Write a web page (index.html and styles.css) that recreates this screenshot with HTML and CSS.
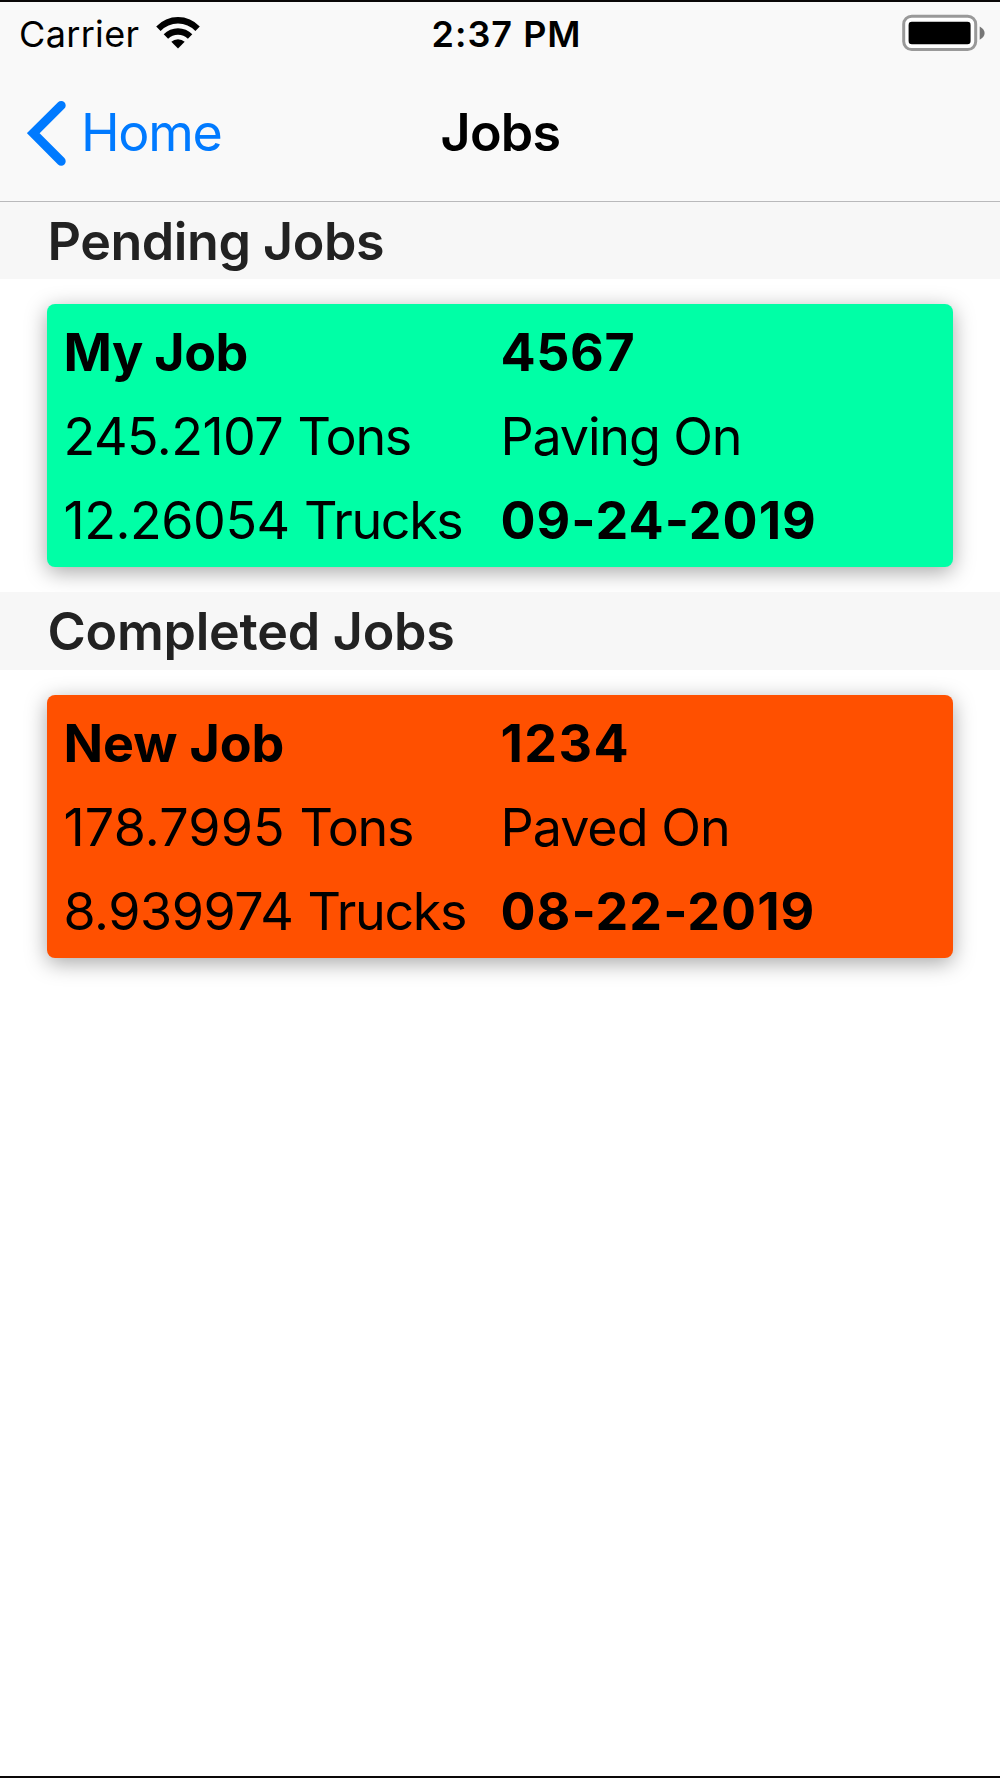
FILE: index.html
```html
<!DOCTYPE html>
<html lang="en">
<head>
<meta charset="utf-8">
<title>Jobs</title>
<link rel="stylesheet" href="styles.css">
</head>
<body>
<div class="screen">
  <header class="top">
    <div class="status">
      <div class="carrier">
        <span class="carrier-name">Carrier</span>
        <svg class="wifi" width="46" height="34" viewBox="0 0 46 34">
          <path d="M1.2 10.4 A30.2 30.2 0 0 1 44.8 10.4 L40.4 14.9 A24.2 24.2 0 0 0 5.6 14.9 Z"/>
          <path d="M8.7 18.2 A20 20 0 0 1 37.3 18.2 L32.9 22.8 A14.1 14.1 0 0 0 13.1 22.8 Z"/>
          <path d="M16.3 25.8 A9.8 9.8 0 0 1 29.7 25.8 L23 32.4 Z"/>
        </svg>
      </div>
      <span class="time">2:37 PM</span>
      <svg class="battery" width="84" height="38" viewBox="0 0 84 38">
        <rect x="2.7" y="2.2" width="72" height="33.4" rx="8" fill="#fff" stroke="#999" stroke-width="3"/>
        <rect x="7.6" y="7.8" width="62" height="22.4" rx="3.2"/>
        <path d="M78.7 12.4 Q83.6 15 83.6 19 Q83.6 23.2 78.7 25.7 Z" fill="#777"/>
      </svg>
    </div>
    <nav class="nav">
      <a class="back">
        <svg width="40" height="66" viewBox="0 0 40 66" fill="none" stroke="#007aff" stroke-width="9" stroke-linecap="round">
          <path d="M34.2 5.4 L6.2 33.2 L34.2 61.2" stroke-linejoin="miter"/>
        </svg>
        <span class="back-label">Home</span>
      </a>
      <h1 class="title">Jobs</h1>
    </nav>
  </header>
  <main>
    <h2 class="section pending-head">Pending Jobs</h2>
    <div class="list">
      <section class="card pending">
        <b class="job-a">My Job</b><b class="num-a">4567</b>
        <span class="tons-a">245.2107 <span class="unit">Tons</span></span><span class="on-a">Paving On</span>
        <span class="trucks">12.26054 <span class="unit">Trucks</span></span><b class="date">09-24-2019</b>
      </section>
    </div>
    <h2 class="section completed-head">Completed Jobs</h2>
    <div class="list">
      <section class="card completed">
        <b class="job-b">New Job</b><b class="num-b">1234</b>
        <span class="tons-b">178.7995 <span class="unit">Tons</span></span><span class="on-b">Paved On</span>
        <span class="trucks">8.939974 <span class="unit">Trucks</span></span><b class="date">08-22-2019</b>
      </section>
    </div>
  </main>
</div>
</body>
</html>
```
FILE: styles.css
```css
* { box-sizing: border-box; margin: 0; padding: 0; }
body { background: #fff; font-family: Inter, "Liberation Sans", sans-serif; color: #000; }
.screen {
  width: 1000px;
  height: 1778px;
  overflow: hidden;
  border-top: 2px solid #0a0808;
  border-bottom: 2px solid #0a0808;
  background: #fff;
}
.top { height: 200px; background: #f9f9f9; border-bottom: 1px solid #b9b9bb; }
.status {
  display: grid;
  grid-template-columns: 431.5px 1fr auto;
  align-items: center;
  height: 63px;
  padding-right: 14.7px;
  font-size: 36px;
  line-height: 44px;
}
.carrier { display: flex; align-items: center; gap: 16px; padding-left: 19px; }
.carrier-name { letter-spacing: .34px; }
.wifi { margin-top: -2px; }
.time { font-weight: 600; letter-spacing: 1px; }
.battery { margin-top: -2px; }
.nav {
  display: grid;
  grid-template-columns: 440.5px 1fr;
  align-items: center;
  height: 135px;
  font-size: 52px;
  line-height: 64px;
}
.back { display: flex; align-items: center; gap: 14px; padding-left: 27px; color: #007aff; }
.back svg { margin-top: 1px; }
.back-label { letter-spacing: -1.3px; }
.title { font-size: 52px; font-weight: 600; letter-spacing: -.75px; }
.section {
  height: 78px;
  padding-left: 47.5px;
  background: #f7f7f7;
  color: #222;
  font-size: 52px;
  font-weight: 600;
  line-height: 80px;
}
.pending-head { height: 77px; line-height: 79px; letter-spacing: -.45px; }
.completed-head { letter-spacing: -.25px; }
.list { height: 313px; padding: 25.3px 47px 0; }
.card {
  display: grid;
  grid-template-columns: 437px 1fr;
  grid-auto-rows: 84px;
  height: 262.5px;
  padding: 6.5px 0 0 16.5px;
  border-radius: 8px;
  box-shadow: 0 5px 21px rgba(0, 0, 0, .35);
  font-size: 52px;
  line-height: 84px;
  white-space: nowrap;
}
.pending { background: #00ffa6; }
.completed { background: #ff5000; }
.job-a { letter-spacing: -.58px; }
.job-b { letter-spacing: -.12px; }
.num-a { letter-spacing: .61px; }
.num-b { letter-spacing: 1.4px; }
.tons-a { letter-spacing: -.5px; }
.tons-b { letter-spacing: .15px; }
.on-a { letter-spacing: -1.15px; }
.on-b { letter-spacing: -1px; }
.trucks { letter-spacing: -.45px; }
.unit { letter-spacing: -1.35px; }
.date { letter-spacing: 1px; }
```
